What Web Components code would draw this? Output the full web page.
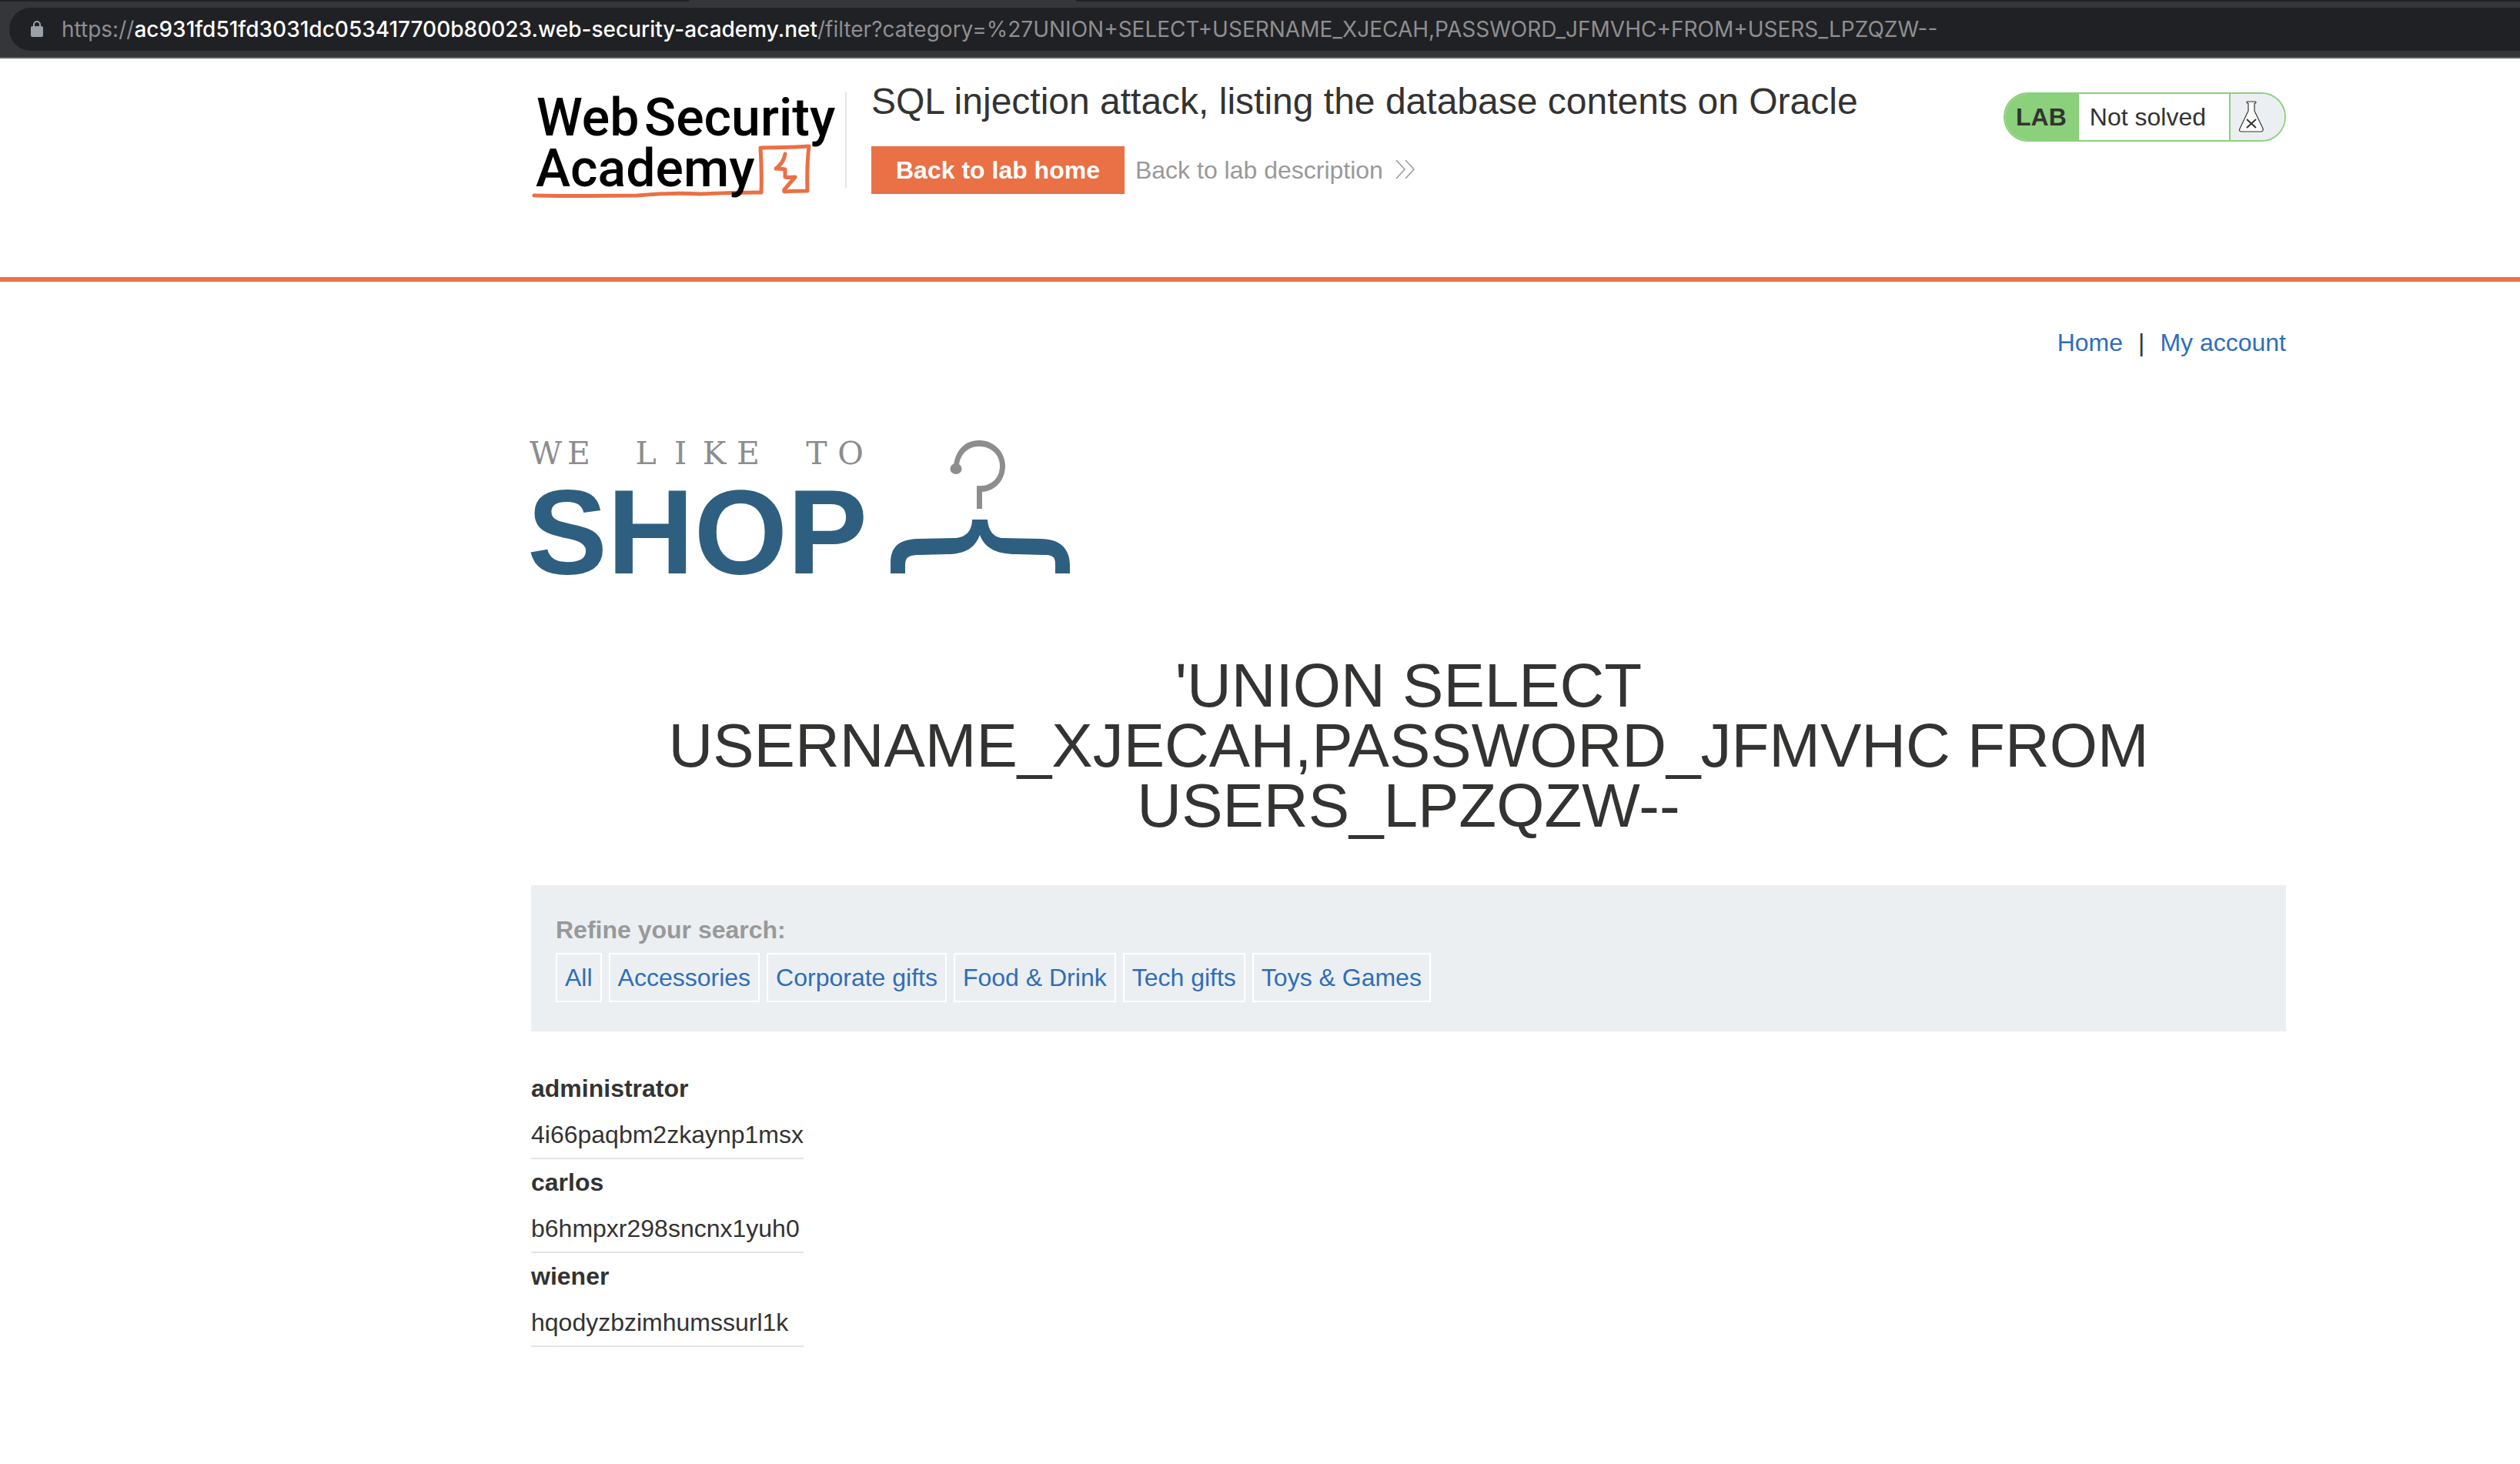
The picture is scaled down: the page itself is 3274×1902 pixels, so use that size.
<!DOCTYPE html>
<html lang="en">
<head>
<meta charset="utf-8">
<title>SQL injection attack, listing the database contents on Oracle</title>
<style>
body { margin: 0; background: #fff; color: #333332; font: 32px/36px "Liberation Sans", Arial, sans-serif; }
</style>
</head>
<body>
<lab-page></lab-page>
<script>
function define(name, html) {
  const template = document.createElement('template');
  template.innerHTML = html;
  customElements.define(name, class extends HTMLElement {
    constructor() {
      super();
      this.attachShadow({ mode: 'open' }).append(template.content.cloneNode(true));
    }
  });
}

define('address-bar', `
<style>
:host { display: block; background: #35363a; border-bottom: 2px solid #5f6064; font: 28px/56px Inter, sans-serif; color: #8e8f91; }
.tabs { display: flex; justify-content: space-between; height: 2px; }
.tabs i { background: #202124; }
.tabs i:first-child { width: 896px; border-bottom-right-radius: 2px; }
.tabs i:last-child { flex: 1; margin-left: 502px; border-bottom-left-radius: 2px; }
.pill { display: flex; align-items: center; gap: 24px; margin: 8px 0 8px 12px; padding-left: 28px; height: 56px; border-radius: 28px 0 0 28px; background: #202124; white-space: nowrap; }
svg { display: block; }
::slotted(b) { font-weight: 500; color: #fff; }
</style>
<div class="tabs"><i></i><i></i></div>
<div class="pill">
<svg width="16" height="22" viewBox="0 0 16 22"><rect y="7" width="16" height="14" rx="2" fill="#9aa0a6"/><path d="M4 8V5a4 4 0 0 1 8 0v3" fill="none" stroke="#9aa0a6" stroke-width="2"/></svg>
<span><slot></slot></span>
</div>`);

define('academy-logo', `
<style>
:host { display: block; }
svg { display: block; overflow: visible; }
text { font: 500 68px Roboto, sans-serif; fill: #000; }
</style>
<svg width="400" height="146" viewBox="0 0 400 146" role="img" aria-label="Web Security Academy">
<g fill="none" stroke="#ea7045" stroke-linecap="round" stroke-linejoin="round" stroke-width="5">
<path d="M4 140Q70 141 138 140Q180 136 220 138Q265 136 299 136"/>
<path d="M299 136Q300 110 298 78Q330 78 361 76Q358 100 359 134Q342 134 329 135Q328 132 331 130L343 116Q336 117 330 116V106Q324 105 318 105Q328 98 330 86"/>
</g>
<text x="7" y="62">Web</text><text x="147" y="62">Security</text>
<text x="6" y="128">Academy</text>
</svg>`);

define('lab-status', `
<style>
:host { display: flex; box-sizing: border-box; height: 64px; border: 2px solid #8bd07a; border-radius: 32px; overflow: hidden; line-height: 60px; }
b { padding: 0 16px 0 14px; background: #8bd07a; }
span { padding: 0 30px 0 14px; border-right: 2px solid #8bd07a; }
.flask { display: flex; align-items: center; width: 70px; padding-left: 10px; box-sizing: border-box; background: #ebeff2; }
</style>
<b>LAB</b><span><slot></slot></span>
<div class="flask"><svg width="34" height="42" viewBox="0 0 34 42" fill="#fff" stroke="#333332" stroke-linejoin="round"><path d="M11 2Q11 1 12 1H22Q23 1 23 2T22 3H21V13L32 36Q33 40 29 40H5Q0 40 2 36L13 13V3H12Q11 3 11 2Z" stroke-width="1.2"/><path d="M11 24L23 35M23 24L11 35" stroke-width="2"/></svg></div>`);

define('lab-header', `
<style>
:host { display: block; box-sizing: border-box; height: 290px; padding: 32px 304px 0 690px; border-bottom: 6px solid #ea7045; }
.row { display: flex; align-items: flex-start; }
academy-logo { margin-top: 6px; }
.divider { width: 2px; height: 124px; margin: 12px 32px 0 8px; background: #e5e5e5; }
h2 { margin: 0; font-size: 48px; line-height: 48px; font-weight: normal; }
.actions { display: flex; align-items: center; gap: 14px; margin-top: 34px; }
a { text-decoration: none; color: #999; display: flex; align-items: center; gap: 16px; }
.home { padding: 0 32px; line-height: 62px; font-weight: bold; color: #fff; background: #ea7045; }
lab-status { margin: 12px 0 0 auto; }
</style>
<div class="row">
<academy-logo></academy-logo>
<div class="divider"></div>
<div>
<h2><slot></slot></h2>
<div class="actions">
<a class="home" href="#home">Back to lab home</a>
<a href="#description">Back to lab description <svg width="26" height="38" viewBox="0 0 26 38" fill="none" stroke="#999" stroke-width="1.5"><path d="M1 6L12 18L1 30M13 6L24 18L13 30"/></svg></a>
</div>
</div>
<lab-status>Not solved</lab-status>
</div>`);

define('top-links', `
<style>
:host { display: flex; justify-content: flex-end; gap: 20px; }
a { color: #2f6eb8; text-decoration: none; }
</style>
<a href="#home">Home</a><span>|</span><a href="#account">My account</a>`);

define('shop-logo', `
<style>
:host { display: block; }
svg { display: block; overflow: visible; }
.small { font: 41px "DejaVu Serif", serif; text-anchor: middle; fill: #8c8d8f; }
.big { font: bold 156px "Liberation Sans", sans-serif; fill: #2f5f80; }
</style>
<svg width="702" height="180" viewBox="0 0 702 180">
<text class="small" x="19 62 105 149 194 238 282 326 371 415" y="31">WE LIKE TO</text>
<text class="big" x="-5" y="173">SHOP</text>
<g fill="#8c8d8f"><ellipse cx="552" cy="37" rx="7.5" ry="7"/>
<path d="M549 33C551 14 563 0 582 0C602 0 616 16 616 33C616 51 604 66 586 67V89H579V59C597 61 609 50 609 33C609 19 598 8 582 8C567 8 557 19 556 33Z"/></g>
<path fill="#2f5f80" d="M573 103H593C594 118 602 127 613 127L662 128C688 128 700 142 700 162V173H681V161C681 150 676 149 666 149L630 148C603 148 589 139 583 123C577 139 565 148 540 148L505 149C492 149 486 151 486 162V173H467V160C467 141 475 129 502 128L550 127C564 127 573 118 573 103Z"/>
</svg>`);

define('search-filter', `
<style>
:host { display: block; padding: 40px 32px 38px; background: #ebeff2; }
.label { font-weight: bold; color: #999; margin-bottom: 12px; }
nav { display: flex; flex-wrap: wrap; gap: 9px; }
::slotted(a) { padding: 0 10px; border: 2px solid #fff; line-height: 60px; color: #2f6eb8; text-decoration: none; }
</style>
<div class="label">Refine your search:</div>
<nav><slot></slot></nav>`);

define('user-table', `
<style>
:host { display: block; }
table { border-collapse: separate; border-spacing: 0; }
th, td { padding: 12px 0; text-align: left; }
td { border-bottom: 2px solid #e5e5e5; }
</style>
<table>
<tr><th>administrator</th></tr><tr><td>4i66paqbm2zkaynp1msx</td></tr>
<tr><th>carlos</th></tr><tr><td>b6hmpxr298sncnx1yuh0</td></tr>
<tr><th>wiener</th></tr><tr><td>hqodyzbzimhumssurl1k</td></tr>
</table>`);

define('lab-page', `
<style>
:host { display: block; }
main { padding: 61px 304px 0 690px; }
shop-logo { margin-top: 109px; }
h1 { margin: 100px auto 64px; max-width: 2000px; font-size: 80px; line-height: 78px; font-weight: normal; text-align: center; }
user-table { margin-top: 44px; }
</style>
<address-bar>https://<b>ac931fd51fd3031dc053417700b80023.web-security-academy.net</b>/filter?category=%27UNION+SELECT+USERNAME_XJECAH,PASSWORD_JFMVHC+FROM+USERS_LPZQZW--</address-bar>
<lab-header>SQL injection attack, listing the database contents on Oracle</lab-header>
<main>
<top-links></top-links>
<shop-logo></shop-logo>
<h1>'UNION SELECT USERNAME_XJECAH,PASSWORD_JFMVHC FROM USERS_LPZQZW--</h1>
<search-filter><a href="#all">All</a><a href="#accessories">Accessories</a><a href="#corporate">Corporate gifts</a><a href="#food">Food &amp; Drink</a><a href="#tech">Tech gifts</a><a href="#toys">Toys &amp; Games</a></search-filter>
<user-table></user-table>
</main>`);
</script>
</body>
</html>
